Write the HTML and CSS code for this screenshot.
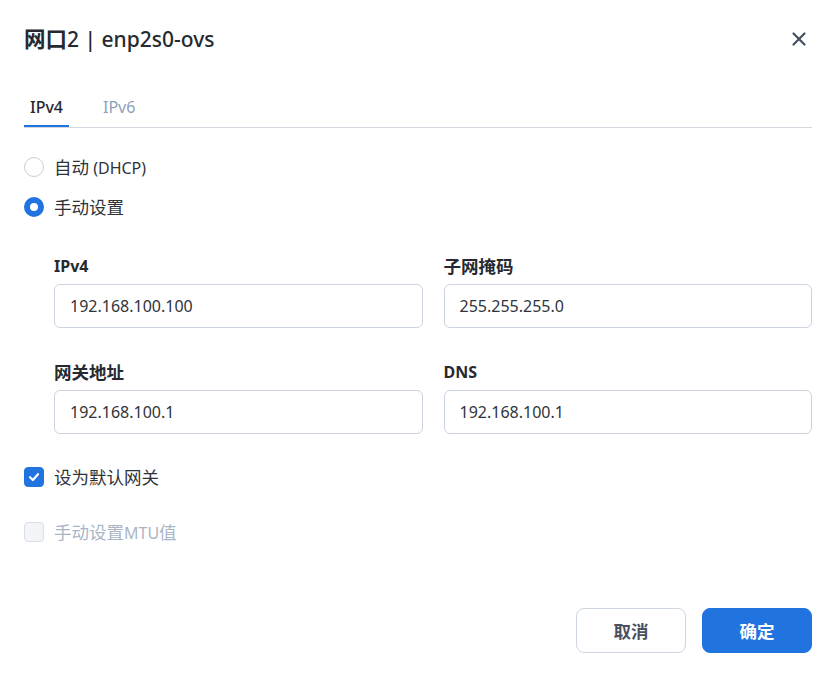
FILE: index.html
```html
<!DOCTYPE html>
<html lang="zh-CN">
<head>
<meta charset="utf-8">
<title>网口2 | enp2s0-ovs</title>
<link rel="stylesheet" href="styles.css">
</head>
<body>
<div class="dialog">
  <header class="dialog-header">
    <h1 class="dialog-title"><span class="zh-title">网口</span>2 | enp2s0-ovs</h1>
    <button class="close-btn" aria-label="关闭">
      <svg width="16" height="16" viewBox="0 0 16 16"><path d="M2.5 2.5 L13.5 13.5 M13.5 2.5 L2.5 13.5" stroke="#454f5f" stroke-width="2.2" stroke-linecap="round" fill="none"/></svg>
    </button>
  </header>

  <nav class="tabs">
    <span class="tab active">IPv4</span>
    <span class="tab">IPv6</span>
  </nav>

  <div class="radio-group">
    <label class="option"><span class="radio"></span><span><span class="zh">自动</span> (DHCP)</span></label>
    <label class="option"><span class="radio checked"></span><span class="zh">手动设置</span></label>
  </div>

  <div class="fields">
    <div class="field">
      <div class="field-label">IPv4</div>
      <div class="input">192.168.100.100</div>
    </div>
    <div class="field">
      <div class="field-label"><span class="zh">子网掩码</span></div>
      <div class="input">255.255.255.0</div>
    </div>
    <div class="field">
      <div class="field-label"><span class="zh">网关地址</span></div>
      <div class="input">192.168.100.1</div>
    </div>
    <div class="field">
      <div class="field-label">DNS</div>
      <div class="input">192.168.100.1</div>
    </div>
  </div>

  <label class="option check-row"><span class="checkbox checked"><svg width="14" height="14" viewBox="0 0 14 14"><path d="M3 7.2 L5.9 10 L11 4.2" stroke="#fff" stroke-width="2.2" fill="none" stroke-linecap="round" stroke-linejoin="round"/></svg></span><span class="zh">设为默认网关</span></label>
  <label class="option check-row disabled"><span class="checkbox"></span><span><span class="zh">手动设置</span>MTU<span class="zh">值</span></span></label>

  <footer class="actions">
    <button class="btn btn-default"><span class="zh">取消</span></button>
    <button class="btn btn-primary"><span class="zh">确定</span></button>
  </footer>
</div>
</body>
</html>
```
FILE: styles.css
```css
html, body {
  margin: 0;
  padding: 0;
  background: #ffffff;
}
body {
  font-family: "Noto Sans", "Noto Sans CJK SC", sans-serif;
  color: #2b2f36;
  font-size: 16px;
}
.zh {
  font-size: 17.5px;
}
.dialog {
  width: 839px;
  height: 691px;
  box-sizing: border-box;
  padding: 0 27px 0 24px;
  background: #fff;
  border-radius: 0 0 12px 12px;
}
.dialog-header {
  height: 80px;
  display: flex;
  align-items: center;
  justify-content: space-between;
}
.dialog-title {
  margin: 0;
  font-size: 21px;
  font-weight: 500;
  color: #262a30;
  line-height: 28px;
  position: relative;
  top: -1px;
}
.zh-title {
  font-size: 21.5px;
  font-weight: 700;
}
.close-btn {
  border: 0;
  background: none;
  padding: 0;
  width: 16px;
  height: 16px;
  margin-right: 5px;
  margin-top: -3px;
  display: flex;
  cursor: pointer;
}
.tabs {
  display: flex;
  gap: 28px;
  border-bottom: 1px solid #d3d9e1;
}
.tab {
  padding: 16px 6px 7px;
  line-height: 22px;
  color: #8da1ba;
  font-size: 16px;
  border-bottom: 2px solid transparent;
}
.tab.active {
  color: #262a30;
  font-weight: 500;
  border-bottom-color: #2173df;
}
.radio-group {
  margin-top: 27px;
  display: flex;
  flex-direction: column;
  gap: 16px;
}
.option {
  display: flex;
  align-items: center;
  gap: 10px;
  line-height: 24px;
  height: 24px;
  color: #2f333a;
}
.radio {
  width: 20px;
  height: 20px;
  box-sizing: border-box;
  border-radius: 50%;
  border: 1.5px solid #c3cedb;
  background: #fff;
}
.radio.checked {
  border: 6.5px solid #2173df;
}
.fields {
  margin-top: 36px;
  padding-left: 30px;
  display: grid;
  grid-template-columns: 1fr 1fr;
  column-gap: 21px;
  row-gap: 33px;
}
.field-label {
  font-weight: 700;
  line-height: 22px;
  height: 22px;
  margin-bottom: 7px;
  color: #262a30;
}
.input {
  height: 44px;
  box-sizing: border-box;
  border: 1px solid #cbd4df;
  border-radius: 6px;
  padding: 0 15px;
  display: flex;
  align-items: center;
  color: #30343b;
}
.check-row {
  margin-top: 31px;
}
.checkbox {
  width: 20px;
  height: 20px;
  box-sizing: border-box;
  border-radius: 4px;
  border: 1px solid #d8dfe8;
  background: #f2f4f7;
  display: flex;
  align-items: center;
  justify-content: center;
}
.checkbox.checked {
  background: #2173df;
  border-color: #2173df;
}
.disabled {
  color: #a8b6c8;
}
.actions {
  margin-top: 64px;
  display: flex;
  justify-content: flex-end;
  gap: 16px;
}
.btn {
  width: 110px;
  height: 45px;
  border-radius: 8px;
  font-family: inherit;
  font-size: 16px;
  font-weight: 700;
  cursor: pointer;
}
.btn-default {
  background: #fff;
  border: 1px solid #cdd5df;
  color: #4a5160;
}
.btn-primary {
  background: #2173df;
  border: 1px solid #2173df;
  color: #fff;
}
```
